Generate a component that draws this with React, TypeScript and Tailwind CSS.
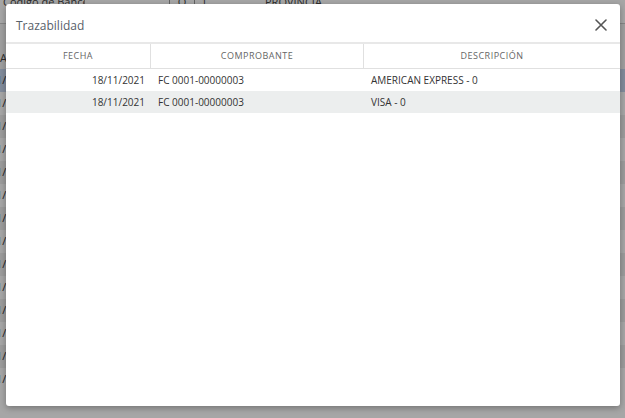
import React from "react";

const bgRows = Array.from({ length: 14 });

export default function App() {
  return (
    <div className="relative w-[625px] h-[418px] overflow-hidden bg-white" style={{ fontFamily: '"Open Sans", "Liberation Sans", sans-serif' }}>
      {/* background app */}
      <div className="flex flex-col">
        <div className="h-[24px] flex items-start text-[11px] text-[#444] border-b border-[#ccc] whitespace-nowrap">
          <div className="w-[85px] pl-[3px] -mt-[6px] border-r border-[#999] overflow-hidden">Código de Banco</div>
          <div className="w-[85px] border-r border-[#999] h-[10px]"></div>
          <div className="w-[25px] border-r border-[#999] h-[10px] -mt-[6px] text-center">Q</div>
          <div className="w-[60px] pl-[6px] -mt-[6px]">1</div>
          <div className="pl-[10px] -mt-[6px]">PROVINCIA</div>
        </div>
        <div className="h-[45px] bg-[#f4f4f4] text-[11px] text-[#444] pt-[26px]">A</div>
        {bgRows.map((_, i) => (
          <div
            key={i}
            className={`h-[23px] text-[11px] text-[#333] flex items-center whitespace-nowrap ${i === 0 ? "bg-[#c8d8f0]" : i % 2 === 0 ? "bg-[#f0f0f0]" : "bg-white"}`}
          >
            <span className="-ml-[4px]">1/</span>
          </div>
        ))}
      </div>
      <div className="absolute inset-0 bg-black/35"></div>

      {/* modal */}
      <div className="absolute left-[6px] top-[4px] w-[614px] h-[402px] bg-white rounded-[3px] shadow-[0_2px_6px_rgba(0,0,0,0.3)] flex flex-col">
        <div className="h-[40px] flex items-center justify-between pl-[10px] pr-[13px] border-b-2 border-[#e8e8e8]">
          <span className="text-[12px] text-[#58606a] pt-[5px]">Trazabilidad</span>
          <svg width="12" height="12" viewBox="0 0 12 12" className="mt-[4px]">
            <path d="M1 1 L11 11 M11 1 L1 11" stroke="#555" strokeWidth="1.6" strokeLinecap="round" />
          </svg>
        </div>
        <div className="flex h-[25px] border-b border-[#e0e0e0] text-[9px] tracking-[0.5px] text-[#666]">
          <div className="w-[145px] flex items-center justify-center border-r border-[#e0e0e0]">FECHA</div>
          <div className="w-[213px] flex items-center justify-center border-r border-[#e0e0e0]">COMPROBANTE</div>
          <div className="flex-1 flex items-center justify-center">DESCRIPCIÓN</div>
        </div>
        {[
          { d: "18/11/2021", c: "FC 0001-00000003", x: "AMERICAN EXPRESS - 0", bg: "bg-white" },
          { d: "18/11/2021", c: "FC 0001-00000003", x: "VISA - 0", bg: "bg-[#eceeee]" },
        ].map((r, i) => (
          <div key={i} className={`flex h-[22px] items-center pt-[1px] text-[10px] text-[#333] ${r.bg}`}>
            <div className="w-[145px] text-right pr-[6px]">{r.d}</div>
            <div className="w-[213px] pl-[7px]">{r.c}</div>
            <div className="flex-1 pl-[7px]">{r.x}</div>
          </div>
        ))}
      </div>
    </div>
  );
}
